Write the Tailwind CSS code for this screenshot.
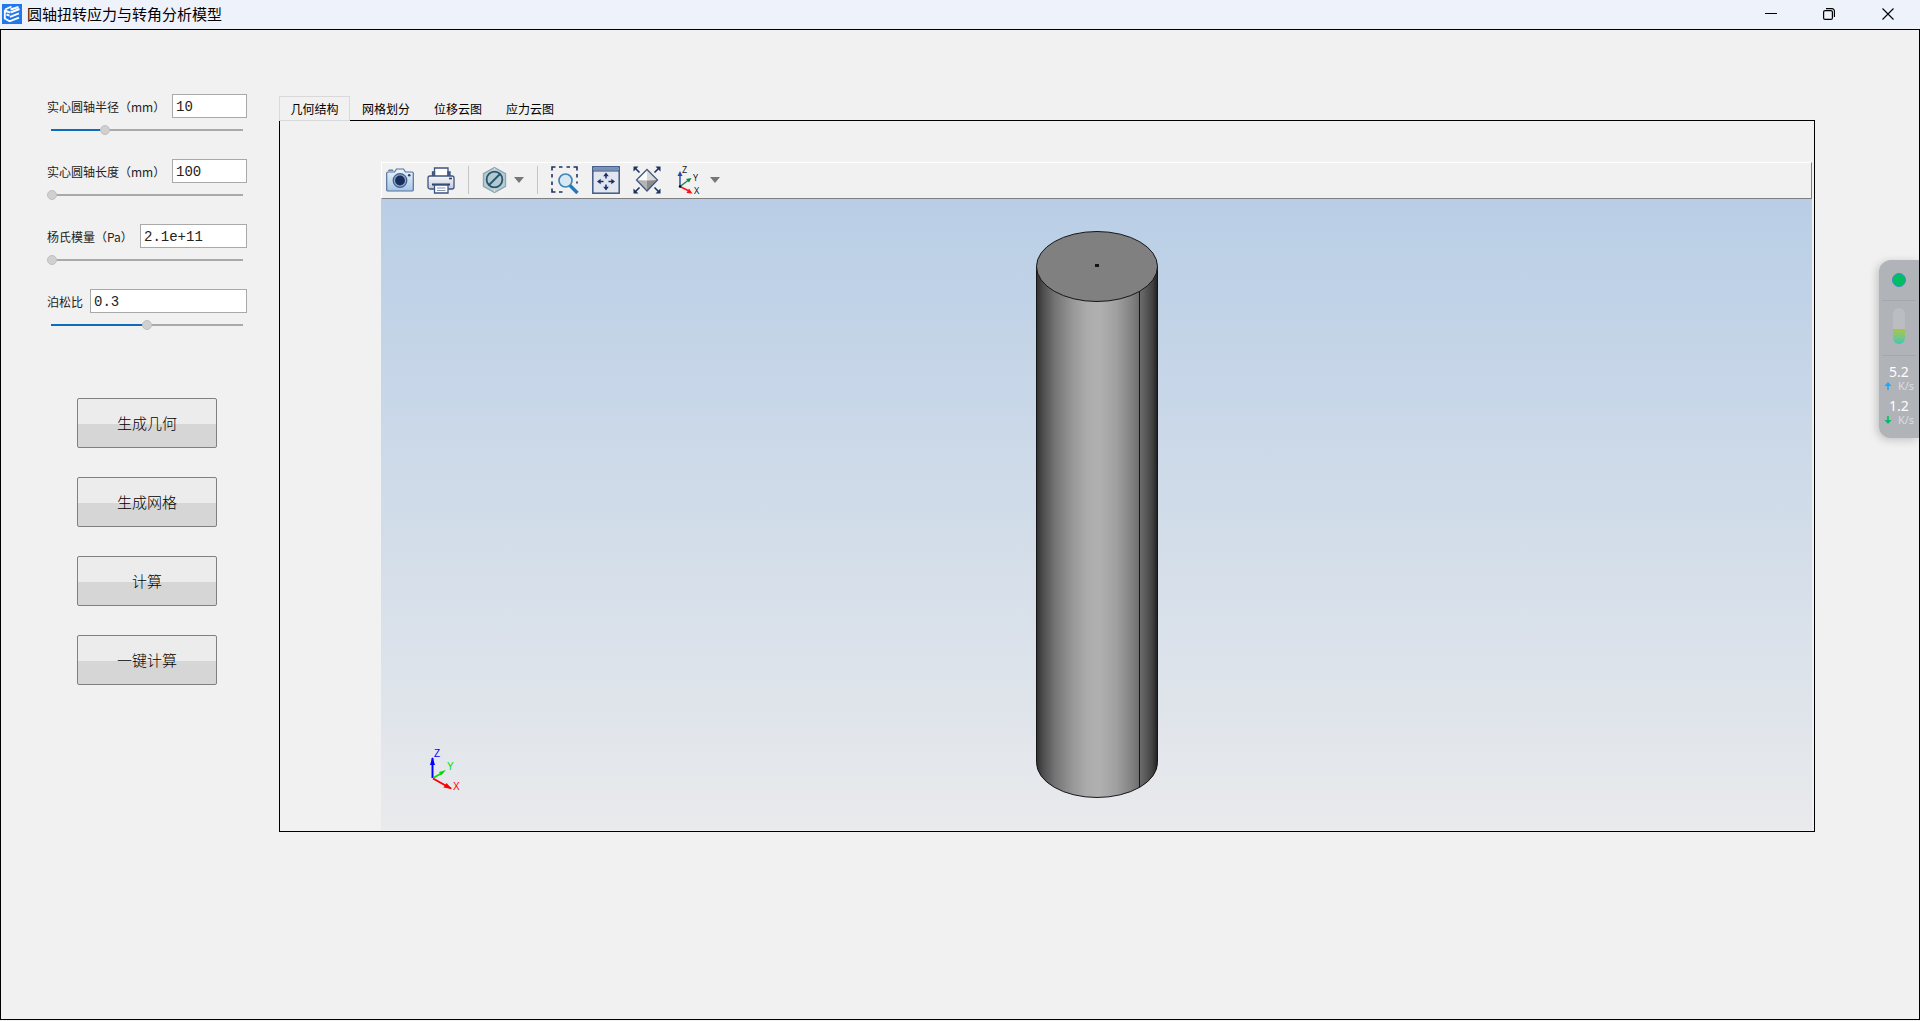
<!DOCTYPE html>
<html lang="zh-CN">
<head>
<meta charset="utf-8">
<title>圆轴扭转应力与转角分析模型</title>
<script src="https://cdn.jsdelivr.net/npm/@tailwindcss/browser@4"></script>
</head>
<body class="relative flex min-h-screen flex-col bg-[#f1f1f1] pb-px font-['Noto_Sans','Noto_Sans_CJK_SC',sans-serif] text-black">
  <header class="flex h-[29px] items-center bg-[#eef2fb] pb-0.5 pl-0.5">
    <svg class="size-5" viewBox="0 0 20 20" aria-hidden="true">
      <rect width="20" height="20" fill="#1f78ec"/>
      <g fill="none" stroke="#fff" stroke-width="1.900">
        <path d="M3 5.500 9.500 2.500M2.500 6.500 8 8.500M2.800 6v8.500L8 17.500M4.500 10.500l3 1.200M8.500 8.500 17.500 5M8 12.800l9-3.500M8 17.200l9-3.600M8.500 5.500 16.500 3"/>
      </g>
    </svg>
    <h1 class="ml-[5px] font-['Noto_Sans_CJK_SC',sans-serif] text-[15px] leading-5">圆轴扭转应力与转角分析模型</h1>
    <div class="ml-auto flex">
      <button class="flex h-7 w-[58px] items-center justify-center" aria-label="最小化"><svg class="size-3" viewBox="0 0 12 12"><path d="M0 5.500h12" stroke="#000"/></svg></button>
      <button class="flex h-7 w-[58px] items-center justify-center" aria-label="还原"><svg class="size-3" viewBox="0 0 12 12" fill="none" stroke="#000" stroke-width="1.200"><rect x=".6" y="2.600" width="8.800" height="8.800" rx="1.500"/><path d="M3 .6h6a2.400 2.400 0 0 1 2.400 2.400v6"/></svg></button>
      <button class="flex h-7 w-[62px] items-center justify-center pr-0.5" aria-label="关闭"><svg class="size-3" viewBox="0 0 12 12"><path d="M.5.5l11 11M11.500.5l-11 11" stroke="#000" stroke-width="1.100"/></svg></button>
    </div>
  </header>

  <main class="flex flex-1 items-start gap-8 border border-black pr-[104px] pl-[46px]">
    <form class="w-[200px] shrink-0 pt-16" onsubmit="return false">
      <div class="flex flex-col gap-[23px] font-['Noto_Sans_CJK_SC',sans-serif] text-[12px]">
        <div class="flex flex-col gap-1.5">
          <div class="flex items-center justify-between">
            <label for="radius" class="pt-px whitespace-nowrap text-[#222]">实心圆轴半径（mm）</label>
            <input id="radius" value="10" class="h-6 w-[75px] border border-[#a9a9a9] bg-white px-[3px] pt-0.5 font-['Liberation_Mono',monospace] text-[14px] text-[#222]">
          </div>
          <input type="range" aria-label="实心圆轴半径" value="28" style="--fill:28%" class="block h-3 w-full appearance-none bg-[linear-gradient(to_right,#0f6cbd_var(--fill),#a9a9a9_var(--fill))] bg-[length:calc(100%-8px)_2px] bg-center bg-no-repeat [&::-webkit-slider-thumb]:size-2.5 [&::-webkit-slider-thumb]:appearance-none [&::-webkit-slider-thumb]:rounded-full [&::-webkit-slider-thumb]:border [&::-webkit-slider-thumb]:border-[#c0c0c0] [&::-webkit-slider-thumb]:bg-[#d0d0d0]">
        </div>
        <div class="flex flex-col gap-1.5">
          <div class="flex items-center justify-between">
            <label for="length" class="pt-px whitespace-nowrap text-[#222]">实心圆轴长度（mm）</label>
            <input id="length" value="100" class="h-6 w-[75px] border border-[#a9a9a9] bg-white px-[3px] pt-0.5 font-['Liberation_Mono',monospace] text-[14px] text-[#222]">
          </div>
          <input type="range" aria-label="实心圆轴长度" value="0" style="--fill:0%" class="block h-3 w-full appearance-none bg-[linear-gradient(to_right,#0f6cbd_var(--fill),#a9a9a9_var(--fill))] bg-[length:calc(100%-8px)_2px] bg-center bg-no-repeat [&::-webkit-slider-thumb]:size-2.5 [&::-webkit-slider-thumb]:appearance-none [&::-webkit-slider-thumb]:rounded-full [&::-webkit-slider-thumb]:border [&::-webkit-slider-thumb]:border-[#c0c0c0] [&::-webkit-slider-thumb]:bg-[#d0d0d0]">
        </div>
        <div class="flex flex-col gap-1.5">
          <div class="flex items-center justify-between">
            <label for="young" class="pt-px whitespace-nowrap text-[#222]">杨氏模量（Pa）</label>
            <input id="young" value="2.1e+11" class="h-6 w-[107px] border border-[#a9a9a9] bg-white px-[3px] pt-0.5 font-['Liberation_Mono',monospace] text-[14px] text-[#222]">
          </div>
          <input type="range" aria-label="杨氏模量" value="0" style="--fill:0%" class="block h-3 w-full appearance-none bg-[linear-gradient(to_right,#0f6cbd_var(--fill),#a9a9a9_var(--fill))] bg-[length:calc(100%-8px)_2px] bg-center bg-no-repeat [&::-webkit-slider-thumb]:size-2.5 [&::-webkit-slider-thumb]:appearance-none [&::-webkit-slider-thumb]:rounded-full [&::-webkit-slider-thumb]:border [&::-webkit-slider-thumb]:border-[#c0c0c0] [&::-webkit-slider-thumb]:bg-[#d0d0d0]">
        </div>
        <div class="flex flex-col gap-1.5">
          <div class="flex items-center justify-between">
            <label for="poisson" class="pt-px whitespace-nowrap text-[#222]">泊松比</label>
            <input id="poisson" value="0.3" class="h-6 w-[157px] border border-[#a9a9a9] bg-white px-[3px] pt-0.5 font-['Liberation_Mono',monospace] text-[14px] text-[#222]">
          </div>
          <input type="range" aria-label="泊松比" value="50" style="--fill:50%" class="block h-3 w-full appearance-none bg-[linear-gradient(to_right,#0f6cbd_var(--fill),#a9a9a9_var(--fill))] bg-[length:calc(100%-8px)_2px] bg-center bg-no-repeat [&::-webkit-slider-thumb]:size-2.5 [&::-webkit-slider-thumb]:appearance-none [&::-webkit-slider-thumb]:rounded-full [&::-webkit-slider-thumb]:border [&::-webkit-slider-thumb]:border-[#c0c0c0] [&::-webkit-slider-thumb]:bg-[#d0d0d0]">
        </div>
      </div>

      <div class="mt-[67px] ml-[30px] flex w-[140px] flex-col gap-[29px] font-['Noto_Sans_CJK_SC',sans-serif] text-[15px] font-light">
        <button class="h-[50px] rounded-xs border border-[#808080] bg-linear-to-b from-[#ececec] from-52% to-[#d6d6d6] to-52%">生成几何</button>
        <button class="h-[50px] rounded-xs border border-[#808080] bg-linear-to-b from-[#ececec] from-52% to-[#d6d6d6] to-52%">生成网格</button>
        <button class="h-[50px] rounded-xs border border-[#808080] bg-linear-to-b from-[#ececec] from-52% to-[#d6d6d6] to-52%">计算</button>
        <button class="h-[50px] rounded-xs border border-[#808080] bg-linear-to-b from-[#ececec] from-52% to-[#d6d6d6] to-52%">一键计算</button>
      </div>
    </form>

    <section class="min-w-0 flex-1 pt-[66px]">
      <div role="tablist" class="flex font-['Noto_Sans_CJK_SC',sans-serif] text-[12px]">
        <button role="tab" aria-selected="true" class="z-10 -mb-px h-[25px] w-[71px] border border-[#d9d9d9] bg-[#f1f1f1] pt-px">几何结构</button>
        <button role="tab" class="h-6 w-[72px] pt-0.5">网格划分</button>
        <button role="tab" class="h-6 w-[72px] pt-0.5">位移云图</button>
        <button role="tab" class="h-6 w-[72px] pt-0.5">应力云图</button>
      </div>

      <div class="border border-black pt-[41px] pr-0.5 pb-px pl-[101px]">
        <div class="flex h-[37px] items-center gap-[13px] border border-white border-r-[#808080] border-b-[#808080] pb-0.5 pl-1">
          <button aria-label="截图" class="shrink-0"><svg class="size-7" viewBox="0 0 28 28">
            <defs><linearGradient id="cam" x2="0" y2="1"><stop offset="0" stop-color="#edf4fb"/><stop offset="1" stop-color="#a9c6e4"/></linearGradient></defs>
            <path d="M2 6h6.500l2-3h7l2 3H26q1.300 0 1.300 1.300v16.400q0 1.300-1.300 1.300H2Q.7 25 .7 23.700V7.300Q.7 6 2 6z" fill="url(#cam)" stroke="#55719c" stroke-width="1.200"/><path d="M2.800 5V4h4v1" fill="#889dbd" stroke="#55719c"/>
            <circle cx="14" cy="14.500" r="6.800" fill="#88a9cd" stroke="#425f8c" stroke-width="1.200"/><circle cx="14" cy="14.500" r="4.900" fill="#182d5a"/><circle cx="23.200" cy="9.200" r="1.300" fill="#274070"/></svg></button>
          <button aria-label="打印" class="shrink-0"><svg class="size-7" viewBox="0 0 28 28" stroke="#3d5480" stroke-width="1.300">
            <defs><linearGradient id="prn" x2="0" y2="1"><stop offset="0" stop-color="#f8f8fb"/><stop offset="1" stop-color="#c3c9d6"/></linearGradient></defs>
            <path d="M7.500 10V2h13.500v8" fill="#fff"/><path d="M5.500 6h2v4h-2zM21 6h2v4h-2z" fill="#526a96"/><rect x="1" y="10" width="26" height="13" rx="2" fill="url(#prn)"/><path d="M22 12.500h3" stroke="#253e6e" stroke-width="1.600"/><path d="M5 18.500h18" stroke="#253e6e" stroke-width="2"/><path d="M7.500 19h13.500v8H7.500z" fill="#fff"/><path d="M10 22h8.500M10 24.500h8.500" stroke="#8293b4" stroke-width="1"/></svg></button>
          <span class="h-7 w-px shrink-0 bg-[#c6c6c6]"></span>
          <button aria-label="隐藏" class="flex shrink-0 items-center gap-1"><svg class="size-7" viewBox="0 0 28 28">
            <path d="M12.500 1.500 23.500 7.700v12.600l-11 6.200-11-6.200V7.700z" fill="#bccdd2" stroke="#8aa8af" stroke-width="1.400"/><path d="M12.500 2v24" stroke="#d7e3e6"/><circle cx="12.500" cy="13.500" r="7.900" fill="#b3c8d1" stroke="#25566f" stroke-width="1.800"/><path d="m7 19 11-11" stroke="#25566f" stroke-width="1.800"/></svg>
            <svg class="h-1.5 w-2.5" viewBox="0 0 10 6"><path d="M0 0h10L5 6z" fill="#777"/></svg></button>
          <span class="h-7 w-px shrink-0 bg-[#c6c6c6]"></span>
          <button aria-label="框选缩放" class="shrink-0"><svg class="size-7" viewBox="0 0 28 28" fill="none">
            <path d="M1 4.500V1h3.500M8 1h3.500M15.500 1h3.500M22.500 1h3.500v3.500M26 8v3.500M1 8v3.500M1 15.500v3.500M1 22.500V26h3.500M8 26h3.500M26 15.500v2" stroke="#1c3263" stroke-width="1.600"/><circle cx="14.500" cy="14.500" r="6.500" fill="#d6e8f5" stroke="#4187b5" stroke-width="1.700"/><path d="m19 19.500 7.500 7.500" stroke="#2479b8" stroke-width="3.400"/></svg></button>
          <button aria-label="平移" class="shrink-0"><svg class="size-7" viewBox="0 0 28 28">
            <rect x=".8" y=".8" width="26.400" height="26.400" fill="#e1e6f0" stroke="#405984" stroke-width="1.500"/><path d="M1.500 1.500h25v3h-25z" fill="#7592bb"/><path d="M1 5h26" stroke="#304975"/>
            <path d="M14 8.500v4M14 18.500v4M7 15.500h4.500M16.500 15.500H21" stroke="#1c3263" stroke-width="1.500"/><path d="m14 6.500 2.800 3.700h-5.600zM14 24.500l2.800-3.700h-5.600zM5 15.500l3.700-2.800v5.600zM23 15.500l-3.700-2.800v5.600z" fill="#1c3263"/></svg></button>
          <button aria-label="适合窗口" class="shrink-0"><svg class="size-7" viewBox="0 0 28 28">
            <path d="M14 3.500v11L3.500 14z" fill="#fafafa"/><path d="M14 3.500 24.500 14l-10.500.5z" fill="#d8d8d8"/><path d="m3.500 14 10.500.5V25z" fill="#b5b5b5"/><path d="M24.500 14l-10.500.5V25z" fill="#8c8c8c"/><path d="M14 3.500 24.500 14 14 25 3.500 14z" fill="none" stroke="#44597f" stroke-width="1.300"/>
            <path d="m1.500 1.500 5 5M26.500 1.500l-5 5M1.500 26.500l5-5M26.500 26.500l-5-5" stroke="#1c3263" stroke-width="1.600"/><path d="M.5.500h5l-5 5zM27.500.5v5l-5-5zM.5 27.500v-5l5 5zM27.500 27.500h-5l5-5z" fill="#1c3263"/></svg></button>
          <button aria-label="视图方向" class="flex shrink-0 items-center gap-2"><svg class="size-7 overflow-visible" viewBox="0 0 28 28">
            <path d="M6 20.500V8" stroke="#2346a8" stroke-width="1.400"/><path d="m6 5 2.500 5h-5z" fill="#2346a8"/><path d="m6 20.500 8-6" stroke="#118743" stroke-width="1.400"/><path d="m17.500 12-2.500 4.500-3-3.500z" fill="#118743"/><path d="m6 20.500 8 4" stroke="#f11" stroke-width="1.400"/><path d="m18.500 27.500-6-.5 2.500-4.500z" fill="#f11"/><circle cx="6" cy="20.500" r="1.200"/>
            <g font-family="Noto Sans" font-size="9" fill="#222"><text x="8" y="6.500">Z</text><text x="19" y="14.500">Y</text><text x="20" y="27.500">X</text></g></svg>
            <svg class="h-1.5 w-2.5" viewBox="0 0 10 6"><path d="M0 0h10L5 6z" fill="#777"/></svg></button>
        </div>

        <div class="relative flex justify-center bg-linear-to-b from-[#b9cee6] to-[#e9eaec] pt-8 pb-8">
          <svg class="h-[567px] w-[122px]" viewBox="0 0 122 567" role="img" aria-label="实心圆轴">
            <defs><linearGradient id="shaft"><stop offset="0" stop-color="#303030"/><stop offset=".06" stop-color="#505050"/><stop offset=".15" stop-color="#737373"/><stop offset=".3" stop-color="#989898"/><stop offset=".42" stop-color="#acacac"/><stop offset=".52" stop-color="#b0b0b0"/><stop offset=".66" stop-color="#a0a0a0"/><stop offset=".8" stop-color="#7e7e7e"/><stop offset=".88" stop-color="#636363"/><stop offset=".96" stop-color="#404040"/><stop offset="1" stop-color="#202020"/></linearGradient></defs>
            <path d="M.5 35.500v496a60.500 35 0 0 0 121 0v-496" fill="url(#shaft)" stroke="#151515"/>
            <ellipse cx="61" cy="35.500" rx="60.500" ry="35" fill="#808080" stroke="#151515"/>
            <path d="M103.500 60.500v496" stroke="#151515"/><rect x="59" y="33" width="4" height="3" fill="#151515"/>
          </svg>
          <svg class="absolute bottom-[38px] left-12 h-11 w-8" viewBox="0 0 32 44" aria-label="坐标轴">
            <path d="M3.500 30V10" stroke="#4a4aff" stroke-width="2.400"/><path d="M3.500 30V12" stroke="#00f"/><path d="M3.500 9 6 17H1z" fill="#00f"/>
            <path d="m4 30 10-5.500" stroke="#0d0" stroke-width="1.500"/><path d="m17 22-7 2 2 3.500z" fill="#0d0"/><path d="m4 30.500 18 10" stroke="#f00" stroke-width="2"/><path d="m23 41-8.500-1.500 3-4.500z" fill="#f00"/>
            <g font-family="Liberation Sans" font-size="10"><text x="5" y="9" fill="#00f">Z</text><text x="18" y="22" fill="#0d0">Y</text><text x="24" y="42" fill="#f00">X</text></g>
          </svg>
        </div>
      </div>
    </section>
  </main>

  <aside class="absolute top-[260px] right-px flex h-[178px] w-10 flex-col items-center rounded-l-xl bg-[#b0b3b8] text-white shadow-[-2px_2px_8px_rgba(0,0,0,0.2)]" aria-label="网速">
    <span class="mt-[13px] size-3.5 rounded-full border border-[#3b8fc0] bg-[#00bf63]"></span>
    <span class="mt-[13px] h-px w-[34px] bg-[#a2a9b0]"></span>
    <span class="mt-[7px] flex h-9 w-3 items-end overflow-hidden rounded-full bg-[#bbbdc1]"><span class="h-[15px] w-full bg-linear-to-b from-[#a8c53c] to-[#3cc5b0]"></span></span>
    <span class="mt-[11px] h-px w-[34px] bg-[#a2a9b0]"></span>
    <span class="mt-2 text-[14px] leading-4">5.2</span>
    <span class="flex items-center gap-1.5 text-[11px] leading-3 text-[#dcdde0]"><svg class="h-2.5 w-2" viewBox="0 0 8 10"><path d="M4 9V3" stroke="#1ba8ff" stroke-width="1.600"/><path d="M4 1 7.500 5h-7z" fill="#1ba8ff"/></svg>K/s</span>
    <span class="mt-1.5 text-[14px] leading-4">1.2</span>
    <span class="flex items-center gap-1.5 text-[11px] leading-3 text-[#dcdde0]"><svg class="h-2.5 w-2" viewBox="0 0 8 10"><path d="M4 1v6" stroke="#00bf63" stroke-width="1.600"/><path d="M4 9 .5 5h7z" fill="#00bf63"/></svg>K/s</span>
  </aside>
</body>
</html>
